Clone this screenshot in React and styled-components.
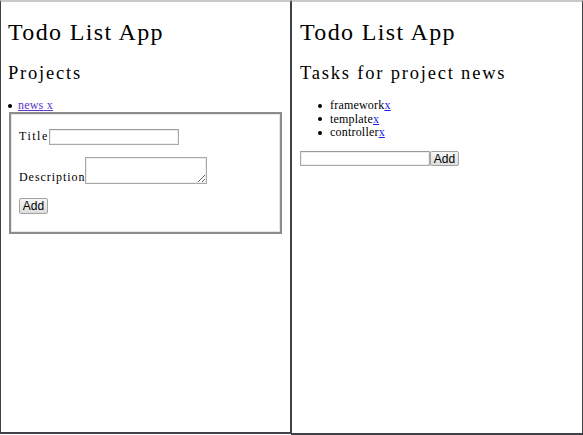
import React from 'react';
import styled, { createGlobalStyle } from 'styled-components';

const GlobalStyle = createGlobalStyle`
  html, body {
    margin: 0;
    padding: 0;
    background: #ffffff;
    overflow: hidden;
  }
`;

const Page = styled.div`
  display: flex;
  align-items: flex-start;
  width: 583px;
  height: 435px;
  font-family: "Liberation Serif", "DejaVu Serif", serif;
  color: #000;
`;

const Frame = styled.section`
  box-sizing: border-box;
  width: ${props => props.$w}px;
  height: ${props => props.$h}px;
  border-top: 2px solid #c9c9c9;
  border-left: 1px solid #3e4247;
  border-right: 1px solid #3e4247;
  border-bottom: 2px solid #3e4247;
  padding: 0 ${props => props.$pad}px;
  background: #fff;
  overflow: hidden;
`;

const AppTitle = styled.h1`
  margin: 18px 0 0 0;
  font-size: 24px;
  line-height: 24px;
  letter-spacing: 1.35px;
  font-weight: normal;
`;

const SectionTitle = styled.h2`
  margin: 20px 0 0 0;
  font-size: 18.5px;
  line-height: 18px;
  letter-spacing: 1.8px;
  font-weight: normal;
`;

const List = styled.ul`
  list-style: none;
  margin: 17px 0 0 0;
  padding: 0 0 0 ${props => props.$indent}px;
`;

const Item = styled.li`
  display: flex;
  align-items: center;
  gap: ${props => props.$gap}px;
  font-size: 12px;
  line-height: 13.5px;
  letter-spacing: 0.2px;
`;

const Bullet = styled.span`
  width: 4px;
  height: 4px;
  border-radius: 50%;
  background: #000;
  flex: none;
`;

const Link = styled.a`
  color: ${props => (props.$visited ? '#5b34c9' : '#1a1aee')};
  text-decoration: underline;
`;

const FormBox = styled.form`
  box-sizing: border-box;
  width: 273px;
  height: 122px;
  margin: -1px 0 0 1px;
  border: 2px solid #8c8c8c;
  box-shadow: inset 0 0 0 1px #e6e6e6;
  padding: 15px 8px 18px;
  display: flex;
  flex-direction: column;
  align-items: flex-start;
`;

const FieldRow = styled.label`
  display: flex;
  align-items: ${props => (props.$bottom ? 'flex-end' : 'center')};
  margin-bottom: ${props => props.$space}px;
  font-size: 12px;
  line-height: 13px;
  letter-spacing: ${props => props.$ls}px;
`;

const TextInput = styled.input`
  box-sizing: border-box;
  width: 130px;
  height: ${props => props.$h}px;
  margin: 0;
  padding: 0 2px;
  border: 1px solid #a9a9a9;
  border-top-color: #9a9a9a;
  box-shadow: inset 0 0 0 1px #ececec;
  font-size: 11px;
  outline: none;
`;

const TextArea = styled.textarea`
  box-sizing: border-box;
  width: 122px;
  height: 27px;
  margin: 0;
  padding: 1px;
  border: 1px solid #a9a9a9;
  box-shadow: inset 0 0 0 1px #ececec;
  resize: both;
  outline: none;
`;

const Button = styled.button`
  box-sizing: border-box;
  width: 29px;
  height: ${props => props.$h}px;
  margin: 0;
  padding: 0;
  border: 1px solid #a2a2a2;
  border-radius: 2px;
  background: linear-gradient(#f6f6f6, #dddddd);
  font-family: "Liberation Sans", Arial, sans-serif;
  font-size: 12px;
  line-height: 1;
  letter-spacing: 0;
  color: #000;
`;

const AddRow = styled.div`
  display: flex;
  margin-top: 11.5px;
`;

const tasks = ['framework', 'template', 'controller'];

export default function App() {
  return (
    <>
      <GlobalStyle />
      <Page>
        <Frame $w={291} $h={434} $pad={7}>
          <AppTitle>Todo List App</AppTitle>
          <SectionTitle>Projects</SectionTitle>
          <List $indent={0}>
            <Item $gap={6}>
              <Bullet />
              <span>
                <Link $visited href="#">news{'\u00a0'}</Link>
                <Link $visited href="#">x</Link>
              </span>
            </Item>
          </List>
          <FormBox onSubmit={e => e.preventDefault()}>
            <FieldRow $space={12} $ls={1.5}>
              Title
              <TextInput type="text" $h={16} />
            </FieldRow>
            <FieldRow $bottom $space={14} $ls={0.95}>
              Description
              <TextArea />
            </FieldRow>
            <Button type="submit" $h={16}>Add</Button>
          </FormBox>
        </Frame>
        <Frame $w={292} $h={435} $pad={8}>
          <AppTitle>Todo List App</AppTitle>
          <SectionTitle>Tasks for project news</SectionTitle>
          <List $indent={18}>
            {tasks.map(task => (
              <Item key={task} $gap={8}>
                <Bullet />
                <span>
                  {task}
                  <Link href="#">x</Link>
                </span>
              </Item>
            ))}
          </List>
          <AddRow>
            <TextInput type="text" $h={15} />
            <Button type="button" $h={15}>Add</Button>
          </AddRow>
        </Frame>
      </Page>
    </>
  );
}
